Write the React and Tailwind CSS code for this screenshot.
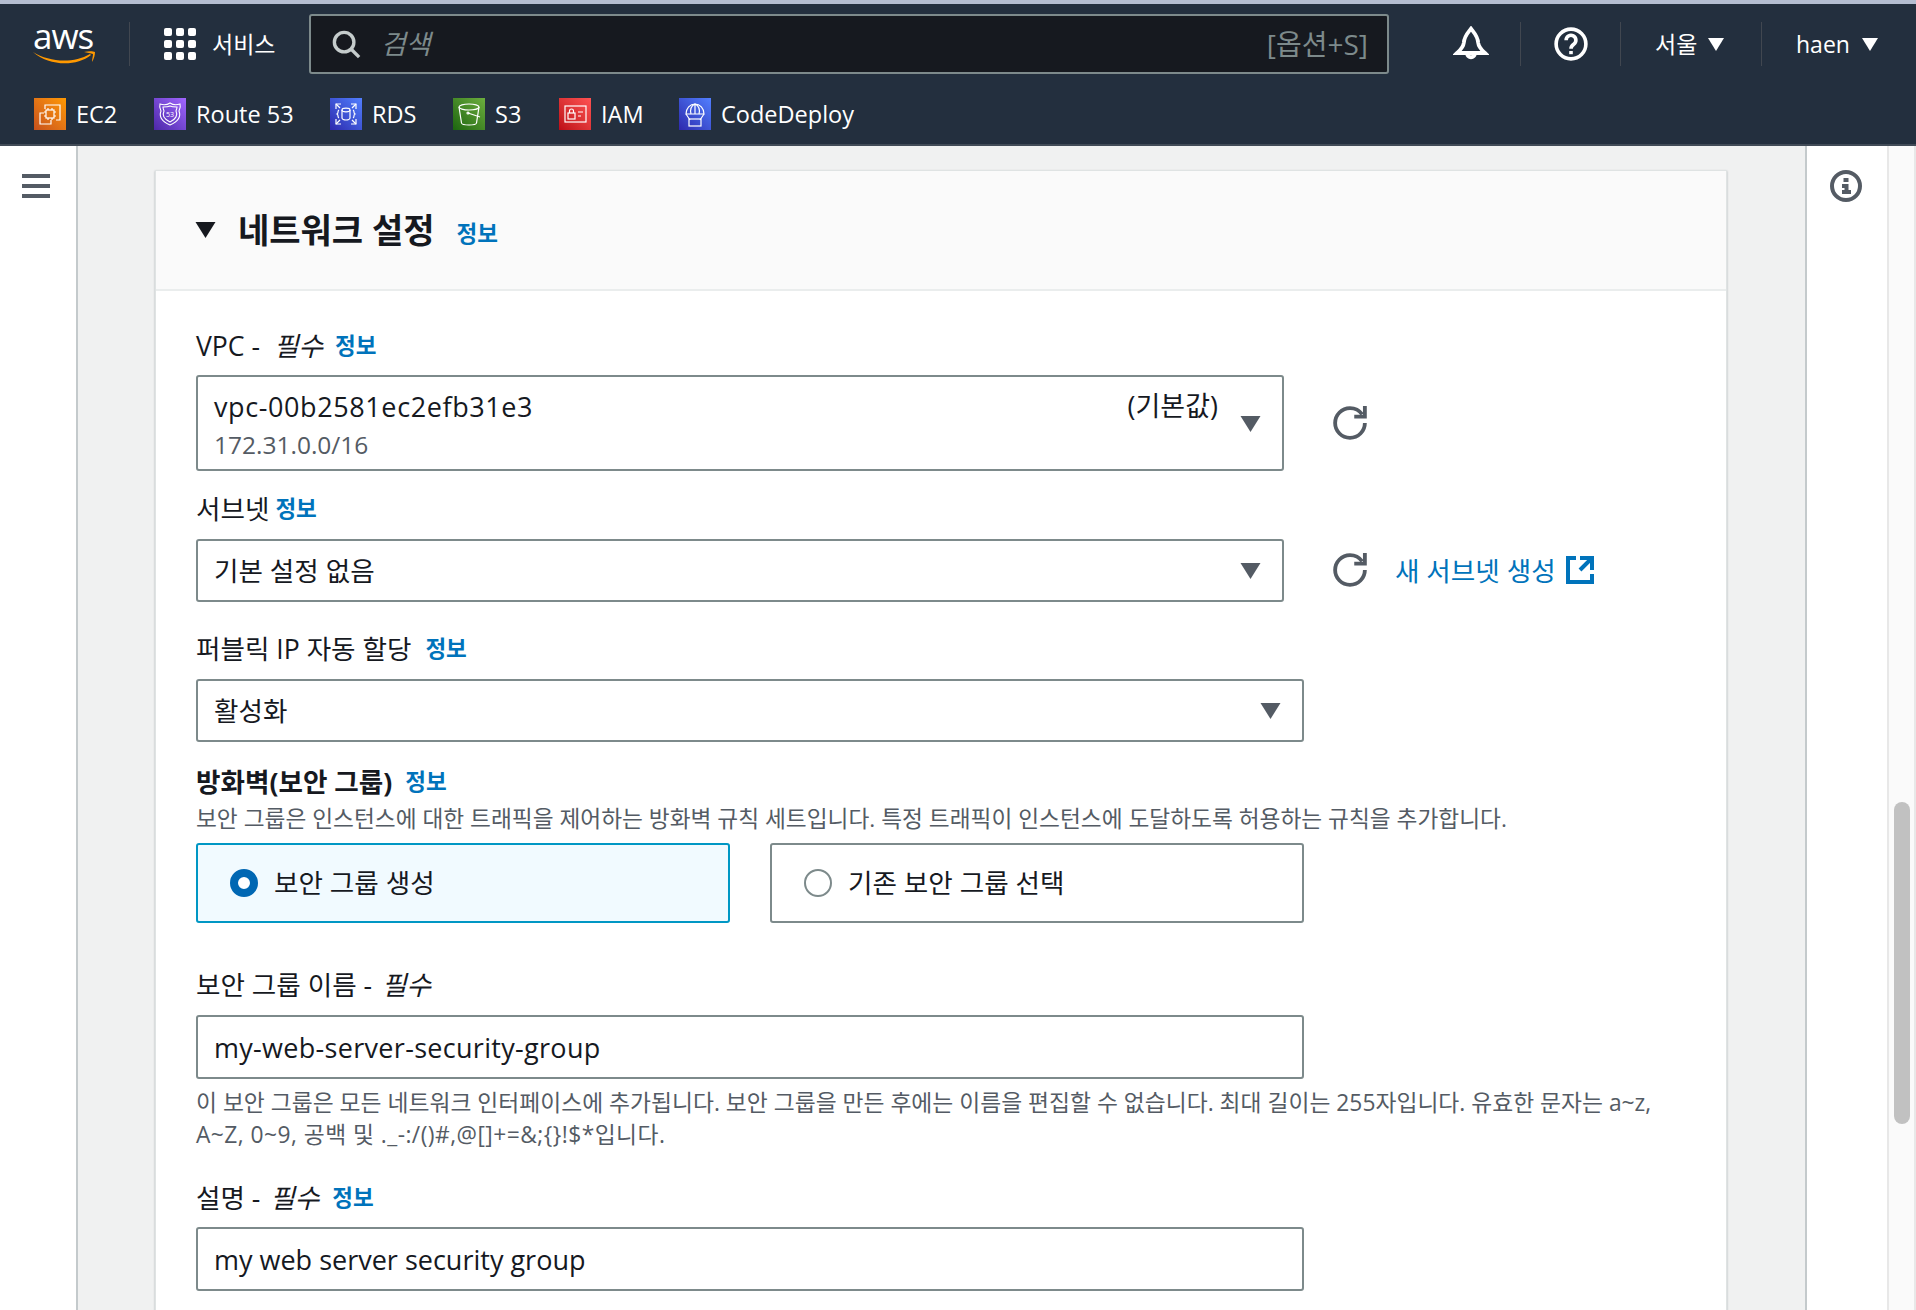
import React from 'react';

const Caret = ({ className = '' }) => (
  <svg width="21" height="16" viewBox="0 0 20 16" className={className} fill="currentColor">
    <path d="M0 0h20L10 16z" />
  </svg>
);

const SmallCaret = ({ className = '' }) => (
  <svg width="16" height="13" viewBox="0 0 20 16" className={className} fill="currentColor">
    <path d="M0 0h20L10 16z" />
  </svg>
);

const Refresh = () => (
  <svg width="34" height="34" viewBox="0 0 16 16" fill="none" stroke="#545b64" strokeWidth="1.8" className="shrink-0">
    <path d="M10 5h5V0" />
    <path d="M15 8a7 7 0 0 1-7 7 7 7 0 0 1-7-7 7 7 0 0 1 7-7c2.36 0 4.45 1.17 5.72 2.96" />
  </svg>
);

const External = () => (
  <svg width="32" height="32" viewBox="0 0 16 16" fill="none" stroke="#0073bb" strokeWidth="2" className="shrink-0">
    <path d="M14 8.01v-6H8M14.02 2 8 8.01M6 2.01H2v12h12v-3.99" />
  </svg>
);

const Ec2Icon = () => (
  <svg viewBox="0 0 32 32" className="h-8 w-8" fill="none" stroke="#fff" strokeWidth="1.2">
    <path d="M11 11V7h15v15h-4" />
    <path d="M10 15H6v11h11v-4" />
    <rect x="12" y="12" width="8" height="8" />
    <path d="M14 12v-2M18 12v-2M14 20v2M18 20v2M12 14h-2M12 18h-2M20 14h2M20 18h2" />
  </svg>
);

const Route53Icon = () => (
  <svg viewBox="0 0 32 32" className="h-8 w-8" fill="none" stroke="#fff" strokeWidth="1.1">
    <path d="M16 5c3 2 7 2 10 1 1 3 0 5-1 7 2 5 0 10-9 14C7 23 5 18 7 13 6 11 5 9 6 6c3 1 7 1 10-1z" />
    <path d="M16 8c2 1 5 1 7 1 0 2-1 3-1 4 2 4 0 8-6 11-6-3-8-7-6-11 0-1-1-2-1-4 2 0 5 0 7-1z" />
    <text x="16" y="19" textAnchor="middle" fontSize="7" fill="#fff" stroke="none">53</text>
  </svg>
);

const RdsIcon = () => (
  <svg viewBox="0 0 32 32" className="h-8 w-8" fill="none" stroke="#fff" strokeWidth="1.2">
    <path d="M6 11V6h5M26 11V6h-5M6 21v5h5M26 21v5h-5" />
    <path d="M6 6l4 4M26 6l-4 4M6 26l4-4M26 26l-4-4" />
    <ellipse cx="16" cy="12" rx="4" ry="1.8" />
    <path d="M12 12v8c0 1 2 2 4 2s4-1 4-2v-8" />
    <path d="M9 12c-2 1 0 3-2 4 2 1 0 3 2 4M23 12c2 1 0 3 2 4-2 1 0 3-2 4" />
  </svg>
);

const S3Icon = () => (
  <svg viewBox="0 0 32 32" className="h-8 w-8" fill="none" stroke="#fff" strokeWidth="1.2">
    <ellipse cx="16" cy="9" rx="10" ry="3" />
    <path d="M6 9l2.5 16c.2 1.5 3.5 2 7.5 2s7.300-.5 7.500-2L26 9" />
    <path d="M15 15l12 4" />
    <circle cx="15" cy="15" r="1" />
  </svg>
);

const IamIcon = () => (
  <svg viewBox="0 0 32 32" className="h-8 w-8" fill="none" stroke="#fff" strokeWidth="1.2">
    <rect x="6" y="8" width="21" height="16" />
    <rect x="9" y="15" width="7" height="6" />
    <path d="M10.500 15v-2a2 2 0 0 1 4 0v2" />
    <path d="M19 14h5M19 18h3" />
  </svg>
);

const CodeDeployIcon = () => (
  <svg viewBox="0 0 32 32" className="h-8 w-8" fill="none" stroke="#fff" strokeWidth="1.2">
    <path d="M7 16a9 10 0 0 1 18 0z" />
    <path d="M16 6v10M12 16c-1-4 0-8 4-10 4 2 5 6 4 10M7 16l4 6M25 16l-4 6" />
    <rect x="10" y="21" width="12" height="7" />
  </svg>
);

const services = [
  { name: 'EC2', Icon: Ec2Icon, bg: 'from-[#c8511b] to-[#ff9900]', width: 'w-[120px]' },
  { name: 'Route 53', Icon: Route53Icon, bg: 'from-[#4d27a8] to-[#a166ff]', width: 'w-[176px]' },
  { name: 'RDS', Icon: RdsIcon, bg: 'from-[#2e27ad] to-[#527fff]', width: 'w-[123px]' },
  { name: 'S3', Icon: S3Icon, bg: 'from-[#1b660f] to-[#6cae3e]', width: 'w-[106px]' },
  { name: 'IAM', Icon: IamIcon, bg: 'from-[#bd0816] to-[#ff5252]', width: 'w-[120px]' },
  { name: 'CodeDeploy', Icon: CodeDeployIcon, bg: 'from-[#2e27ad] to-[#527fff]', width: '' },
];

const Divider = () => <div className="h-[44px] w-px bg-[#414750]" />;

const Header = () => (
  <header className="h-[146px] shrink-0 border-t-4 border-b-2 border-t-[#b4bdd0] border-b-[#414b57] bg-[#232f3e] text-white">
    <div className="flex h-[80px] items-center pl-[32px]">
      <div className="relative h-[44px] w-[64px] shrink-0">
        <span className="absolute left-[1px] top-[-8px] font-['Open_Sans',sans-serif] text-[35px] leading-[44px] tracking-[-1px]">aws</span>
        <svg viewBox="0 0 64 16" className="absolute left-0 top-[27px] h-[16px] w-[64px]" fill="#ff9900">
          <path d="M1 3c16 10 40 12 57 2l1 1C44 18 17 17 1 3z" />
          <path d="M52 3c4-1 9-1 11 0 0 3-1 7-3 10 0-3 1-6 1-8-2-1-6-1-9-2z" />
        </svg>
      </div>
      <div className="ml-[33px]"><Divider /></div>
      <div className="ml-[34px] grid w-[32px] grid-cols-3 gap-[4px]">
        {Array.from({ length: 9 }).map((_, i) => (
          <span key={i} className="h-[8px] w-[8px] rounded-[2px] bg-white" />
        ))}
      </div>
      <span className="ml-[16px] w-[62px] whitespace-nowrap text-[23px]">서비스</span>
      <div className="ml-[35px] flex h-[60px] w-[1080px] shrink-0 items-center rounded-[3px] border-2 border-[#7d8a8b] bg-[#16191f] pl-[20px] pr-[19px]">
        <svg width="30" height="30" viewBox="0 0 16 16" fill="none" stroke="#c5cccc" strokeWidth="1.8">
          <circle cx="7" cy="7" r="5.2" />
          <path d="M10.800 10.800 15 15" />
        </svg>
        <span className="ml-[20px] text-[27px] italic text-[#7d8a8b]">검색</span>
        <span className="ml-auto text-[28px] text-[#7d8a8b]">[옵션+S]</span>
      </div>
      <svg width="36" height="36" viewBox="0 0 16 16" fill="none" stroke="#fff" strokeWidth="1.7" className="ml-[64px] shrink-0">
        <path d="M8 1.200C6.300 3.400 5 4.500 4.800 7.500 4.600 9.500 3.400 10.500 1.800 12h12.400c-1.600-1.500-2.800-2.500-3-4.500C11 4.500 9.700 3.400 8 1.200z" />
        <path d="M6.300 12.200a1.700 1.700 0 0 0 3.400 0" />
      </svg>
      <div className="ml-[31px]"><Divider /></div>
      <svg width="34" height="34" viewBox="0 0 16 16" fill="none" stroke="#fff" strokeWidth="1.7" className="ml-[33px] shrink-0">
        <circle cx="8" cy="8" r="7" />
        <path d="M5.700 6.200a2.300 2.300 0 1 1 3.600 1.900C8.500 8.700 8 9.100 8 10.200" />
        <path d="M8 11.300v1.500" />
      </svg>
      <div className="ml-[32px]"><Divider /></div>
      <span className="ml-[34px] w-[42px] whitespace-nowrap text-[23px]">서울</span>
      <SmallCaret className="ml-[11px] shrink-0" />
      <div className="ml-[37px]"><Divider /></div>
      <span className="ml-[34px] w-[54px] whitespace-nowrap text-[23px]">haen</span>
      <SmallCaret className="ml-[12px] shrink-0" />
    </div>
    <nav className="flex h-[54px] items-start pl-[34px] pt-[14px]">
      {services.map(({ name, Icon, bg, width }) => (
        <div key={name} className={`flex h-8 items-center gap-[10px] ${width}`}>
          <span className={`h-8 w-8 shrink-0 bg-linear-to-tr ${bg}`}><Icon /></span>
          <span className="whitespace-nowrap text-[23.500px] leading-8">{name}</span>
        </div>
      ))}
    </nav>
  </header>
);

const Info = ({ className = '' }) => (
  <a className={`text-[22.500px] font-bold text-[#0073bb] ${className}`}>정보</a>
);

const Label = ({ children, mt }) => (
  <div className={`flex h-[34px] items-center whitespace-nowrap pt-[2px] text-[26.600px] leading-[34px] text-[#16191f] ${mt}`}>
    {children}
  </div>
);

const Select = ({ width, children }) => (
  <div className={`mt-[14px] flex h-[63px] shrink-0 items-center rounded-[3px] border-2 border-[#7d8a8b] pl-[16px] pr-[21px] text-[26.600px] text-[#16191f] ${width}`}>
    <span className="pt-[2px]">{children}</span>
    <Caret className="ml-auto text-[#545b64]" />
  </div>
);

const TextInput = ({ children, mt, className = '' }) => (
  <div className={`flex h-[64px] w-[1108px] items-center rounded-[3px] border-2 border-[#7d8a8b] pl-[16px] pt-[2px] text-[27px] text-[#16191f] ${mt} ${className}`}>
    {children}
  </div>
);

const NetworkCard = () => (
  <section className="mt-[24px] w-[1572px] border border-[#dfe3e3] bg-white shadow-[0_1px_2px_rgba(0,28,36,0.3)]">
    <div className="flex h-[120px] items-center gap-[22px] border-b-2 border-[#eaeded] bg-[#fafafa] pl-[39px]">
      <Caret className="text-[#16191f]" />
      <h2 className="text-[34px] font-bold text-[#16191f]">네트워크 설정</h2>
      <Info className="mt-[8px]" />
    </div>
    <div className="pl-[40px] pb-[40px] pt-[37px]">
      <Label>
        VPC -<i className="ml-[14px]">필수</i>
        <Info className="ml-[12px]" />
      </Label>
      <div className="flex items-center">
        <div className="mt-[13px] flex h-[96px] w-[1088px] shrink-0 rounded-[3px] border-2 border-[#7d8a8b] pl-[16px] pr-[21px] text-[#16191f]">
          <div className="pt-[12px]">
            <div className="text-[27px] leading-[36px] tracking-[0.6px]">vpc-00b2581ec2efb31e3</div>
            <div className="mt-[4px] text-[24.500px] leading-[32px] text-[#545b64]">172.31.0.0/16</div>
          </div>
          <span className="ml-auto mt-[11px] text-[27px] leading-[36px]">(기본값)</span>
          <Caret className="ml-[22px] mt-[39px] text-[#545b64]" />
        </div>
        <div className="ml-[49px] mt-[13px]"><Refresh /></div>
      </div>
      <Label mt="mt-[20px]">
        서브넷
        <Info className="ml-[6px]" />
      </Label>
      <div className="flex items-center">
        <Select width="w-[1088px]">기본 설정 없음</Select>
        <div className="ml-[49px] mt-[14px] flex items-center">
          <Refresh />
          <a className="ml-[28px] whitespace-nowrap pt-[2px] text-[26.600px] text-[#0073bb]">새 서브넷 생성</a>
          <span className="ml-[8px]"><External /></span>
        </div>
      </div>
      <Label mt="mt-[29px]">
        퍼블릭 IP 자동 할당
        <Info className="ml-[14px]" />
      </Label>
      <Select width="w-[1108px]">활성화</Select>
      <Label mt="mt-[22px]">
        <b>방화벽(보안 그룹)</b>
        <Info className="ml-[13px]" />
      </Label>
      <p className="mt-[4px] whitespace-nowrap text-[22.700px] leading-[34px] text-[#545b64]">
        보안 그룹은 인스턴스에 대한 트래픽을 제어하는 방화벽 규칙 세트입니다. 특정 트래픽이 인스턴스에 도달하도록 허용하는 규칙을 추가합니다.
      </p>
      <div className="mt-[7px] flex w-[1108px] gap-[40px]">
        <label className="flex h-[80px] flex-1 items-center rounded-[3px] border-2 border-[#0097c4] bg-[#f1faff] pl-[32px] text-[26.600px] text-[#16191f]">
          <span className="h-[28px] w-[28px] rounded-full border-[8px] border-[#0067b3] bg-white" />
          <span className="ml-[16px] pt-[2px]">보안 그룹 생성</span>
        </label>
        <label className="flex h-[80px] flex-1 items-center rounded-[3px] border-2 border-[#7d8a8b] pl-[32px] text-[26.600px] text-[#16191f]">
          <span className="h-[28px] w-[28px] rounded-full border-2 border-[#7d8a8b] bg-white" />
          <span className="ml-[16px] pt-[2px]">기존 보안 그룹 선택</span>
        </label>
      </div>
      <Label mt="mt-[44px]">
        보안 그룹 이름 -&nbsp;<i className="ml-[3px]">필수</i>
      </Label>
      <TextInput mt="mt-[14px]" className="tracking-[0.3px]">my-web-server-security-group</TextInput>
      <p className="mt-[8px] w-[1500px] text-[22.800px] leading-[32px] text-[#545b64]">
        이 보안 그룹은 모든 네트워크 인터페이스에 추가됩니다. 보안 그룹을 만든 후에는 이름을 편집할 수 없습니다. 최대 길이는 255자입니다. 유효한 문자는 a~z,
        <br />
        <span className="tracking-[0.45px]">A~Z, 0~9, 공백 및 ._-:/()#,@[]+=&amp;;{'{}'}!$*입니다.</span>
      </p>
      <Label mt="mt-[29px]">
        설명 -&nbsp;<i className="ml-[3px]">필수</i>
        <Info className="ml-[13px]" />
      </Label>
      <TextInput mt="mt-[13px]">my web server security group</TextInput>
    </div>
  </section>
);

export default function App() {
  return (
    <div className="flex h-[1310px] w-[1916px] flex-col overflow-hidden bg-white font-['Open_Sans','Noto_Sans_CJK_KR',sans-serif]">
      <Header />
      <div className="flex min-h-0 flex-1">
        <aside className="w-[78px] shrink-0 border-r-2 border-[#c4cacc] bg-white pl-[22px] pt-[28px]">
          <div className="flex w-[28px] flex-col gap-[6px]">
            <span className="h-[4px] bg-[#545b64]" />
            <span className="h-[4px] bg-[#545b64]" />
            <span className="h-[4px] bg-[#545b64]" />
          </div>
        </aside>
        <main className="w-[1727px] shrink-0 bg-[#f0f1f1] pl-[77px]">
          <NetworkCard />
        </main>
        <aside className="flex w-[82px] shrink-0 justify-center border-l-2 border-[#c4cacc] bg-white pr-[2px] pt-[24px]">
          <svg width="32" height="32" viewBox="0 0 32 32" fill="#545b64">
            <circle cx="16" cy="16" r="14" fill="none" stroke="#545b64" strokeWidth="4" />
            <rect x="13.500" y="8" width="5" height="4" />
            <path d="M12 14h6.500v6H21v4H12v-4h2.500v-2H12z" />
          </svg>
        </aside>
        <div className="w-[29px] shrink-0 border-x-2 border-[#e8e8e8] bg-[#fafafa] pl-[5px] pt-[656px]">
          <div className="h-[322px] w-[16px] rounded-full bg-[#c1c1c1]" />
        </div>
      </div>
    </div>
  );
}
